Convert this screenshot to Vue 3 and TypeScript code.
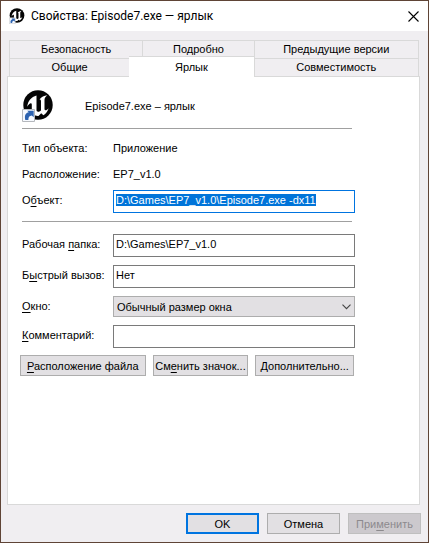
<script setup lang="ts">
import { onMounted, ref } from 'vue'

interface Tab {
  id: string
  label: string
}

const backTabs: Tab[] = [
  { id: 'security', label: 'Безопасность' },
  { id: 'details', label: 'Подробно' },
  { id: 'versions', label: 'Предыдущие версии' },
]
const frontTabs: Tab[] = [
  { id: 'general', label: 'Общие' },
  { id: 'shortcut', label: 'Ярлык' },
  { id: 'compat', label: 'Совместимость' },
]

const activeTab = ref('shortcut')
const target = ref('D:\\Games\\EP7_v1.0\\Episode7.exe -dx11')
const folder = ref('D:\\Games\\EP7_v1.0')
const hotkey = ref('Нет')
const windowMode = ref('normal')
const comment = ref('')
const targetInput = ref<HTMLInputElement | null>(null)

onMounted(() => {
  targetInput.value?.focus()
  targetInput.value?.select()
})
</script>

<template>
  <main class="window">
    <header class="titlebar">
      <svg class="app-icon small" viewBox="0 0 32 32" aria-hidden="true">
        <use href="#app-logo" />
      </svg>
      <h1 class="title">Свойства: Episode7.exe — ярлык</h1>
      <button class="close" type="button" aria-label="Закрыть">
        <svg viewBox="0 0 11 11" aria-hidden="true">
          <path d="M.5.5l10 10M10.5.5l-10 10" fill="none" stroke="#000" stroke-width="1.1" />
        </svg>
      </button>
    </header>

    <div class="body">
      <div class="tabs" role="tablist">
        <div class="tab-row back">
          <button v-for="tab in backTabs" :key="tab.id" class="tab" type="button" role="tab" :aria-selected="activeTab === tab.id">{{ tab.label }}</button>
        </div>
        <div class="tab-row front">
          <button
            v-for="tab in frontTabs"
            :key="tab.id"
            class="tab"
            :class="{ active: activeTab === tab.id }"
            type="button"
            role="tab"
            :aria-selected="activeTab === tab.id"
          >{{ tab.label }}</button>
        </div>
      </div>

      <section class="panel" role="tabpanel">
        <div class="heading">
          <svg class="app-icon" viewBox="0 0 32 32" aria-hidden="true">
            <g id="app-logo">
              <circle cx="16" cy="15" r="14.7" fill="#050505" />
              <path d="M14.500 5.500C9.300 7 5.800 11 5.200 16.800 6.500 14.500 8 13.100 9 13.300c.8.2.8.9.8 1.700v5.500c0 1.300-.8 1.600-2.100 1.300 2.100 3 5 4.300 8.800 4.100l2.700-2.600 2.200 1.900c2.500-1.600 4.500-4.100 5.200-7-1.300 1.500-2.400 2.100-3.200 2-.7-.1-.9-.6-.9-1.400v-9c0-1.800 1.300-3.400 2.800-4.500-3.200.4-5.900 1.700-7.800 4.200 1-.1 1.500.5 1.500 1.500v9.300c-.8 1-1.800 1.600-2.800 1.500-1.100-.1-1.700-.8-1.700-1.800V8.500c0-1 0-2 0-3z" fill="#fff" />
              <path d="M.5 19.500h12v12H.5z" fill="#f7faff" stroke="#b5b8bd" />
              <path d="M3.300 30c-1.100-4.700.5-7.200 3.500-7.700L5.200 20.800h6.500v6.500l-1.900-1.800c-2.600.3-3.500 1.700-3.400 4.500z" fill="#2d63b0" />
            </g>
          </svg>
          <span>Episode7.exe – ярлык</span>
        </div>
        <hr class="rule" />

        <dl class="facts">
          <dt>Тип объекта:</dt>
          <dd>Приложение</dd>
          <dt>Расположение:</dt>
          <dd>EP7_v1.0</dd>
        </dl>
        <div class="field">
          <label for="target">О<u>б</u>ъект:</label>
          <input id="target" ref="targetInput" v-model="target" type="text" spellcheck="false" />
        </div>
        <hr class="rule" />

        <div class="fields">
          <div class="field">
            <label for="folder">Рабочая <u>п</u>апка:</label>
            <input id="folder" v-model="folder" type="text" spellcheck="false" />
          </div>
          <div class="field">
            <label for="hotkey">Б<u>ы</u>стрый вызов:</label>
            <input id="hotkey" v-model="hotkey" type="text" spellcheck="false" />
          </div>
          <div class="field">
            <label for="mode"><u>О</u>кно:</label>
            <div class="select">
              <select id="mode" v-model="windowMode">
                <option value="normal">Обычный размер окна</option>
                <option value="min">Свернутое в значок</option>
                <option value="max">Развернутое на весь экран</option>
              </select>
              <svg class="chevron" viewBox="0 0 9 6" aria-hidden="true">
                <path d="M.5.700l4 4 4-4" fill="none" stroke="#444" stroke-width="1.1" />
              </svg>
            </div>
          </div>
          <div class="field">
            <label for="comment"><u>К</u>омментарий:</label>
            <input id="comment" v-model="comment" type="text" />
          </div>
        </div>

        <div class="actions">
          <button class="btn" type="button"><u>Р</u>асположение файла</button>
          <button class="btn" type="button">См<u>е</u>нить значок...</button>
          <button class="btn" type="button"><u>Д</u>ополнительно...</button>
        </div>
      </section>

      <footer class="footer">
        <button class="btn primary" type="button">OK</button>
        <button class="btn" type="button">Отмена</button>
        <button class="btn" type="button" disabled>При<u>м</u>енить</button>
      </footer>
    </div>
  </main>
</template>

<style>
body {
  background: #f0eef1;
}
</style>

<style scoped>
.window,
.window * {
  box-sizing: border-box;
}
.window {
  display: flex;
  flex-direction: column;
  min-height: 100vh;
  border: 1px solid #5f4436;
  background: #f0eef1;
  color: #000;
  font: 11px/14px "Liberation Sans", Arial, sans-serif;
}
button,
input,
select {
  margin: 0;
  font: inherit;
  color: inherit;
  border-radius: 0;
}
u {
  text-underline-offset: 2px;
}
.titlebar {
  display: flex;
  align-items: center;
  height: 30px;
  padding-left: 8px;
  background: #fff;
}
.app-icon {
  flex: none;
  width: 32px;
  height: 32px;
}
.app-icon.small {
  width: 16px;
  height: 16px;
}
.title {
  flex: 1;
  margin: 0 0 0 6px;
  font: 12px/16px Roboto, sans-serif;
  white-space: nowrap;
}
.close {
  display: flex;
  align-items: center;
  justify-content: center;
  width: 30px;
  height: 28px;
  padding: 0;
  border: 0;
  background: transparent;
}
.close svg {
  width: 11px;
  height: 11px;
}
.body {
  display: flex;
  flex: 1;
  flex-direction: column;
  padding: 9px 7px 8px 6px;
}
.tabs {
  position: relative;
  padding: 0 2px;
}
.tab-row {
  display: grid;
}
.tab-row.back {
  grid-template-columns: 133fr 111fr 165fr;
}
.tab-row.front {
  grid-template-columns: 120fr 124fr 165fr;
}
.tab {
  height: 18px;
  padding: 0;
  border: 1px solid #d9d9d9;
  border-width: 1px 0 0 1px;
  background: #f0eef1;
  line-height: 17px;
  white-space: nowrap;
}
.tab:last-child {
  border-right-width: 1px;
}
.tab.active {
  height: 21px;
  margin: -2px 0 -1px;
  border-left: 0;
  background: #fff;
}
.panel {
  flex: 1;
  margin-right: 1px;
  padding: 13px 64px 20px 14px;
  border: 1px solid #d9d9d9;
  background: #fff;
}
.heading {
  display: flex;
  align-items: center;
  gap: 31px;
}
.rule {
  height: 1px;
  margin: 6px 3px 0 0;
  border: 0;
  background: #a0a0a0;
}
.facts,
.field {
  display: grid;
  grid-template-columns: 91px 1fr;
}
.facts {
  row-gap: 12px;
  margin: 12px 0 9px;
}
.facts dd {
  margin: 0;
}
.field label {
  padding-top: 3px;
  white-space: nowrap;
}
.field input {
  width: 100%;
  height: 23px;
  padding: 1px 2px 4px;
  border: 1px solid #7a7a7a;
  background: #fff;
  outline: 0;
}
.field input:focus {
  border-color: #0074e0;
}
.field input::selection {
  background: #0074d9;
  color: #fff;
}
.field + .rule {
  margin-top: 8px;
}
.fields {
  display: grid;
  gap: 8px;
  margin-top: 12px;
}
.select {
  display: grid;
  align-items: center;
}
.select > * {
  grid-area: 1 / 1;
}
.select select {
  width: 100%;
  height: 21px;
  padding: 0 20px 0 3px;
  border: 1px solid #adadad;
  background: #e2e0e3;
  appearance: none;
}
.chevron {
  justify-self: end;
  width: 9px;
  height: 6px;
  margin-right: 4px;
  pointer-events: none;
}
.btn {
  height: 21px;
  padding: 0;
  border: 1px solid #adadad;
  background: #e2e0e3;
  line-height: 18px;
  white-space: nowrap;
}
.btn:disabled {
  border-color: #bfbfbf;
  background: #ccc9cd;
  color: #8c8a8d;
}
.btn.primary {
  border: 2px solid #0074e0;
  line-height: 16px;
}
.actions {
  display: grid;
  grid-template-columns: 126fr 96fr 99fr;
  gap: 7px;
  margin: 7px 1px 0 -2px;
}
.footer {
  display: grid;
  grid-template-columns: repeat(3, 73px);
  justify-content: end;
  gap: 8px;
  padding-top: 8px;
}
</style>
